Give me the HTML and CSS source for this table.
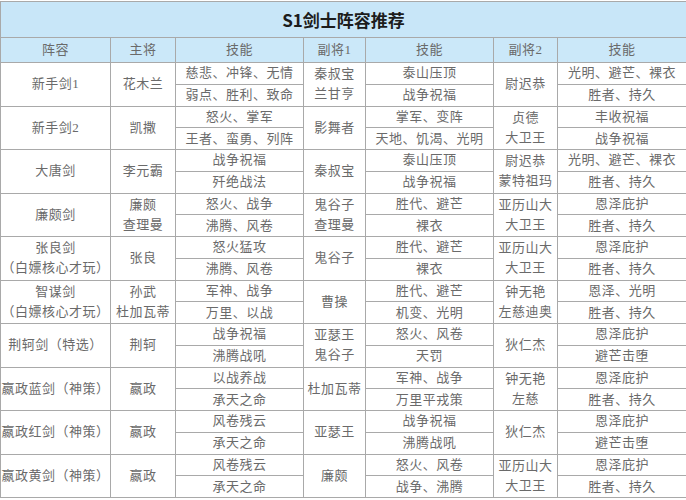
FILE: index.html
```html
<!DOCTYPE html>
<html lang="zh">
<head>
<meta charset="utf-8">
<link rel="stylesheet" href="styles.css">
</head>
<body>
<table class="lineup">
<colgroup>
<col class="c1"><col class="c2"><col class="c3"><col class="c4"><col class="c5"><col class="c6"><col class="c7">
</colgroup>
<thead>
<tr class="title-row"><th colspan="7" class="title">S1剑士阵容推荐</th></tr>
<tr class="head-row"><th>阵容</th><th>主将</th><th>技能</th><th>副将1</th><th>技能</th><th>副将2</th><th>技能</th></tr>
</thead>
<tbody>
<tr><td rowspan="2">新手剑1</td><td rowspan="2">花木兰</td><td>慈悲、冲锋、无情</td><td rowspan="2">秦叔宝<br>兰甘亨</td><td>泰山压顶</td><td rowspan="2">尉迟恭</td><td>光明、避芒、裸衣</td></tr>
<tr><td>弱点、胜利、致命</td><td>战争祝福</td><td>胜者、持久</td></tr>
<tr><td rowspan="2">新手剑2</td><td rowspan="2">凯撒</td><td>怒火、掌军</td><td rowspan="2">影舞者</td><td>掌军、变阵</td><td rowspan="2">贞德<br>大卫王</td><td>丰收祝福</td></tr>
<tr><td>王者、蛮勇、列阵</td><td>天地、饥渴、光明</td><td>战争祝福</td></tr>
<tr><td rowspan="2">大唐剑</td><td rowspan="2">李元霸</td><td>战争祝福</td><td rowspan="2">秦叔宝</td><td>泰山压顶</td><td rowspan="2">尉迟恭<br>蒙特祖玛</td><td>光明、避芒、裸衣</td></tr>
<tr><td>歼绝战法</td><td>战争祝福</td><td>胜者、持久</td></tr>
<tr><td rowspan="2">廉颇剑</td><td rowspan="2">廉颇<br>查理曼</td><td>怒火、战争</td><td rowspan="2">鬼谷子<br>查理曼</td><td>胜代、避芒</td><td rowspan="2">亚历山大<br>大卫王</td><td>恩泽庇护</td></tr>
<tr><td>沸腾、风卷</td><td>裸衣</td><td>胜者、持久</td></tr>
<tr><td rowspan="2">张良剑<br>（白嫖核心才玩）</td><td rowspan="2">张良</td><td>怒火猛攻</td><td rowspan="2">鬼谷子</td><td>胜代、避芒</td><td rowspan="2">亚历山大<br>大卫王</td><td>恩泽庇护</td></tr>
<tr><td>沸腾、风卷</td><td>裸衣</td><td>胜者、持久</td></tr>
<tr><td rowspan="2">智谋剑<br>（白嫖核心才玩）</td><td rowspan="2">孙武<br>杜加瓦蒂</td><td>军神、战争</td><td rowspan="2">曹操</td><td>胜代、避芒</td><td rowspan="2">钟无艳<br>左慈迪奥</td><td>恩泽、光明</td></tr>
<tr><td>万里、以战</td><td>机变、光明</td><td>胜者、持久</td></tr>
<tr><td rowspan="2">荆轲剑（特选）</td><td rowspan="2">荆轲</td><td>战争祝福</td><td rowspan="2">亚瑟王<br>鬼谷子</td><td>怒火、风卷</td><td rowspan="2">狄仁杰</td><td>恩泽庇护</td></tr>
<tr><td>沸腾战吼</td><td>天罚</td><td>避芒击堕</td></tr>
<tr><td rowspan="2">嬴政蓝剑（神策）</td><td rowspan="2">嬴政</td><td>以战养战</td><td rowspan="2">杜加瓦蒂</td><td>军神、战争</td><td rowspan="2">钟无艳<br>左慈</td><td>恩泽庇护</td></tr>
<tr><td>承天之命</td><td>万里平戎策</td><td>胜者、持久</td></tr>
<tr><td rowspan="2">嬴政红剑（神策）</td><td rowspan="2">嬴政</td><td>风卷残云</td><td rowspan="2">亚瑟王</td><td>战争祝福</td><td rowspan="2">狄仁杰</td><td>恩泽庇护</td></tr>
<tr><td>承天之命</td><td>沸腾战吼</td><td>避芒击堕</td></tr>
<tr><td rowspan="2">嬴政黄剑（神策）</td><td rowspan="2">嬴政</td><td>风卷残云</td><td rowspan="2">廉颇</td><td>怒火、风卷</td><td rowspan="2">亚历山大<br>大卫王</td><td>恩泽庇护</td></tr>
<tr><td>承天之命</td><td>战争、沸腾</td><td>胜者、持久</td></tr>
</tbody>
</table>
</body>
</html>
```

FILE: styles.css
```css
html, body {
  margin: 0;
  padding: 0;
  background: #ffffff;
}

.lineup {
  width: 686px;
  border-collapse: collapse;
  table-layout: fixed;
  font-family: "Liberation Serif", "Noto Sans CJK SC", serif;
  font-size: 13px;
  letter-spacing: 0.5px;
  color: #6a6a6a;
  margin-top: 1px;
}

.c1 { width: 110px; }
.c2 { width: 65px; }
.c3 { width: 128px; }
.c4 { width: 62px; }
.c5 { width: 128px; }
.c6 { width: 64px; }
.c7 { width: 129px; }

.lineup th,
.lineup td {
  border: 1px solid #a9a9a9;
  padding: 0;
  text-align: center;
  vertical-align: middle;
  line-height: 20px;
  white-space: nowrap;
  overflow: hidden;
}

.lineup th {
  font-weight: normal;
  background: #cbe8f9;
}

.title-row {
  height: 36px;
}

.lineup th.title {
  font-family: "Noto Sans CJK SC", "Liberation Sans", sans-serif;
  font-weight: bold;
  font-size: 17px;
  letter-spacing: 0;
  color: #1c1c1c;
  background: #c8e6f8;
}

.head-row {
  height: 25px;
}

.lineup tbody tr {
  height: 21.75px;
}
```
